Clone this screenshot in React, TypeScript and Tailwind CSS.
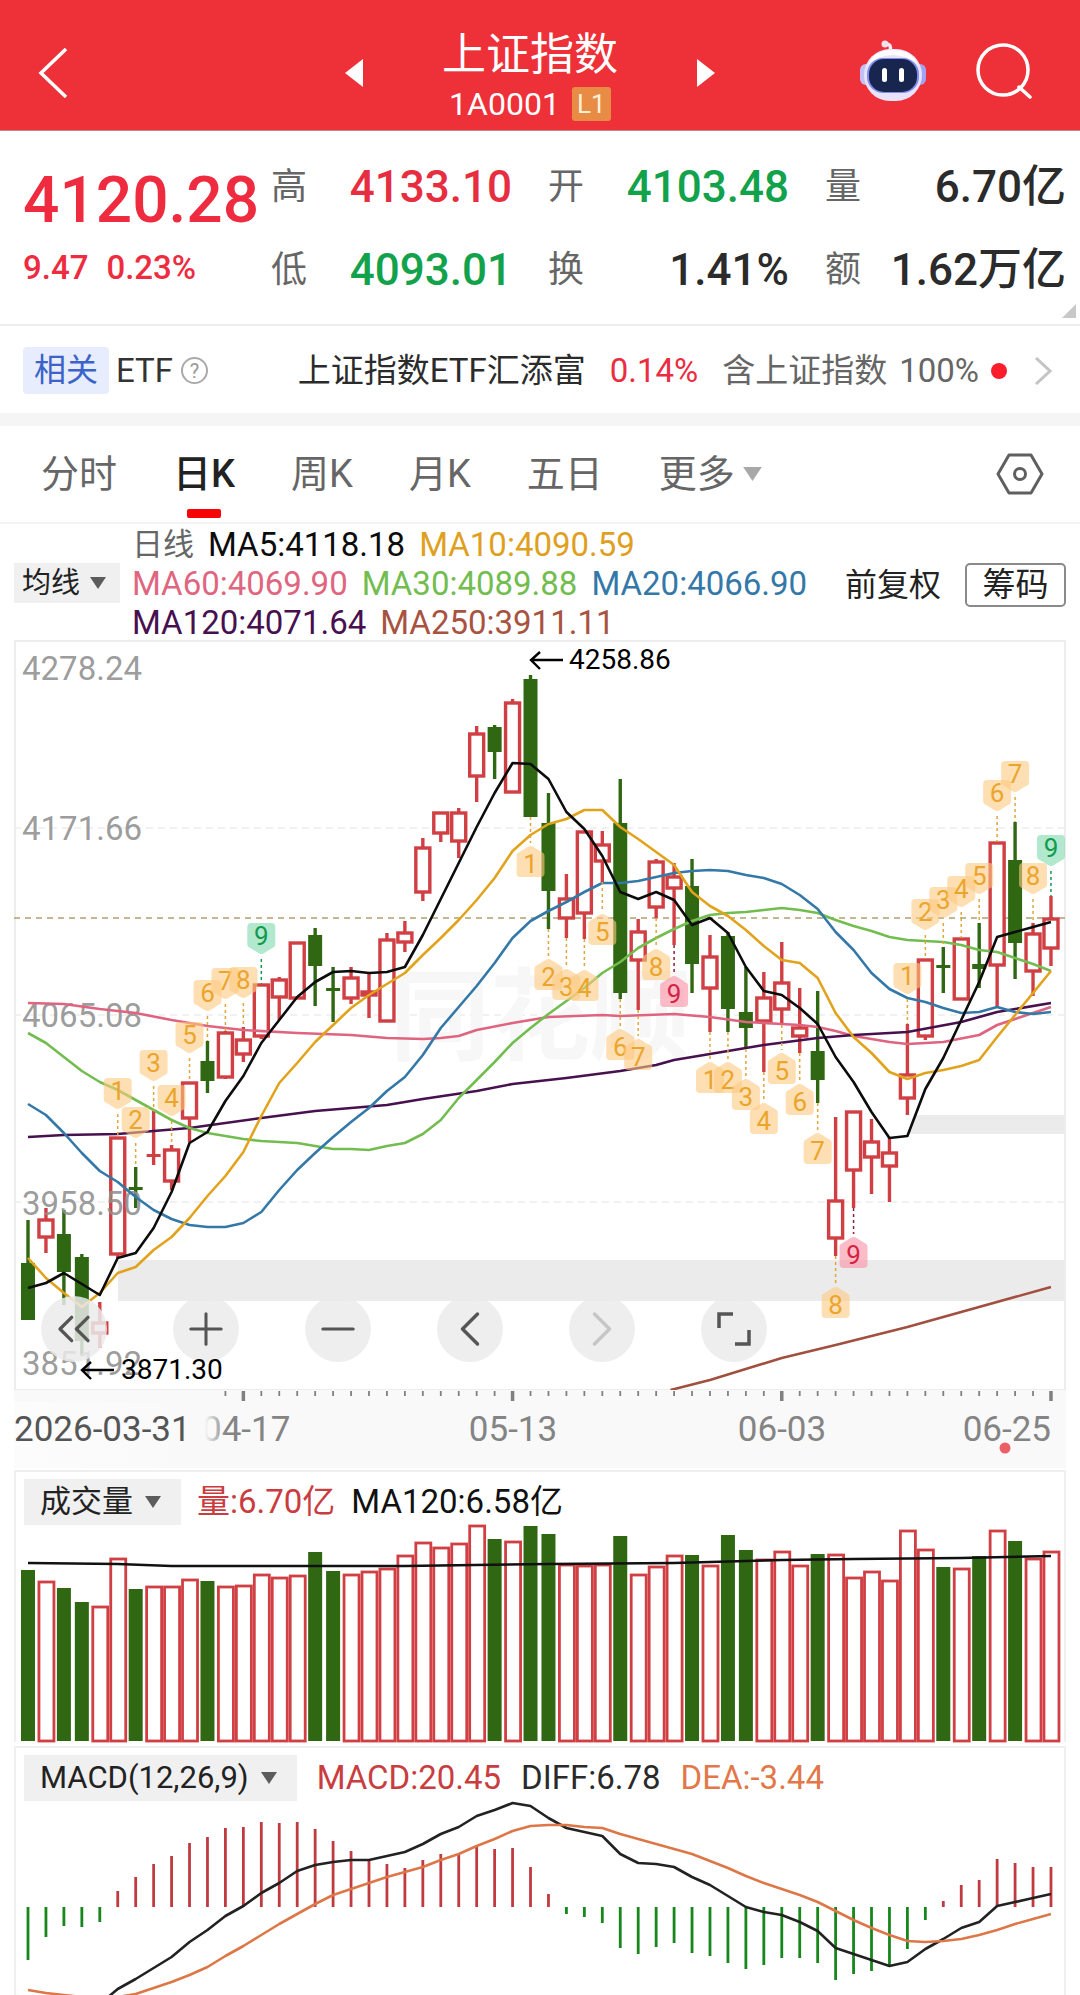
import { ChevronLeft, ChevronRight, ChevronsLeft, Minus, Plus } from "lucide-react";
import React, { useState } from "react";

const RED = "#d03f43";
const GREEN = "#2f6712";
const STEP = 17.947;
const cx = (i: number) => 28 + i * STEP;

// [high, body top, body bottom, low, 1 = up / 0 = down]
const candles = [
  [1220, 1263, 1320, 1320, 0],
  [1208, 1219, 1238, 1253, 1],
  [1210, 1234, 1272, 1305, 0],
  [1254, 1257, 1341, 1355, 0],
  [1302, 1322, 1334, 1348, 1],
  [1137, 1137, 1255, 1258, 1],
  [1167, 1187, 1189, 1208, 0],
  [1111, 1154, 1156, 1165, 1],
  [1145, 1149, 1182, 1190, 1],
  [1082, 1082, 1119, 1142, 1],
  [1041, 1061, 1081, 1093, 0],
  [1031, 1032, 1078, 1079, 1],
  [1027, 1039, 1055, 1062, 1],
  [984, 984, 1037, 1039, 1],
  [977, 979, 998, 1020, 1],
  [942, 942, 999, 999, 1],
  [928, 935, 966, 1006, 0],
  [967, 988, 990, 1022, 0],
  [967, 977, 999, 1004, 1],
  [972, 991, 996, 1018, 1],
  [933, 939, 1022, 1022, 1],
  [921, 932, 943, 952, 1],
  [838, 847, 893, 901, 1],
  [812, 812, 834, 842, 1],
  [808, 812, 842, 858, 1],
  [726, 733, 777, 802, 1],
  [725, 727, 752, 779, 0],
  [699, 702, 793, 793, 1],
  [675, 679, 817, 817, 0],
  [793, 823, 891, 929, 0],
  [874, 898, 919, 938, 1],
  [831, 831, 914, 939, 1],
  [831, 844, 862, 882, 1],
  [779, 823, 993, 999, 0],
  [919, 931, 961, 1010, 1],
  [859, 861, 908, 918, 1],
  [863, 876, 889, 945, 1],
  [859, 886, 964, 993, 0],
  [935, 956, 989, 1032, 1],
  [932, 936, 1009, 1032, 0],
  [967, 1012, 1028, 1049, 0],
  [972, 997, 1022, 1072, 1],
  [942, 982, 1010, 1025, 1],
  [988, 1027, 1037, 1053, 1],
  [991, 1051, 1080, 1103, 0],
  [1117, 1200, 1239, 1256, 1],
  [1111, 1111, 1171, 1208, 1],
  [1119, 1141, 1158, 1194, 1],
  [1137, 1152, 1167, 1202, 1],
  [1024, 1074, 1099, 1115, 1],
  [959, 959, 1037, 1040, 1],
  [947, 965, 968, 993, 0],
  [938, 938, 1000, 1000, 1],
  [923, 964, 969, 988, 0],
  [842, 842, 966, 1007, 1],
  [822, 860, 943, 979, 0],
  [923, 933, 972, 996, 1],
  [896, 918, 949, 966, 1],
];

const volumes = [
  1570, 1581, 1588, 1602, 1606, 1558, 1589, 1586, 1586, 1579, 1581, 1586, 1585, 1574, 1577, 1575, 1552, 1571, 1574,
  1571, 1568, 1555, 1542, 1547, 1543, 1525, 1539, 1541, 1526, 1534, 1564, 1565, 1564, 1536, 1574, 1566, 1555, 1555,
  1565, 1535, 1550, 1559, 1551, 1565, 1554, 1554, 1577, 1571, 1580, 1530, 1549, 1567, 1568, 1556, 1530, 1541, 1558,
  1551,
];

const macd = [
  1960, 1937, 1926, 1927, 1922, 1891, 1877, 1864, 1856, 1843, 1837, 1828, 1827, 1822, 1823, 1822, 1829, 1841, 1851,
  1860, 1864, 1868, 1860, 1854, 1853, 1846, 1849, 1848, 1867, 1894, 1914, 1917, 1923, 1948, 1954, 1947, 1943, 1953,
  1956, 1963, 1969, 1965, 1958, 1958, 1963, 1980, 1974, 1971, 1966, 1949, 1920, 1901, 1885, 1880, 1859, 1863, 1867,
  1867,
];

const diff = [
  2036, 2030, 2024, 2015, 2004, 1989, 1979, 1968, 1957, 1942, 1930, 1916, 1906, 1893, 1883, 1871, 1865, 1862, 1860,
  1860, 1856, 1852, 1844, 1834, 1827, 1816, 1810, 1803, 1806, 1818, 1828, 1832, 1836, 1854, 1863, 1864, 1867, 1877,
  1885, 1896, 1907, 1912, 1915, 1922, 1931, 1948, 1954, 1960, 1966, 1962, 1949, 1939, 1928, 1922, 1906, 1902, 1898,
  1894,
];

const dea = [
  1990, 1993, 1995, 1997, 1998, 1997, 1994, 1988, 1982, 1975, 1967, 1956, 1946, 1935, 1924, 1914, 1904, 1895, 1889,
  1883, 1877, 1872, 1867, 1860, 1854, 1846, 1839, 1831, 1826, 1825, 1825, 1827, 1828, 1834, 1839, 1844, 1849, 1854,
  1861, 1868, 1876, 1883, 1889, 1895, 1902, 1911, 1920, 1928, 1935, 1941, 1942, 1941, 1939, 1935, 1930, 1924, 1919,
  1914,
];

const ma5 = [
  1288, 1283, 1273, 1284, 1295, 1258, 1253, 1228, 1192, 1143, 1132, 1101, 1076, 1043, 1020, 997, 982, 972, 971, 973,
  972, 967, 935, 899, 863, 827, 793, 763, 764, 779, 812, 829, 856, 892, 899, 892, 900, 925, 918, 933, 967, 991, 995,
  1008, 1024, 1057, 1082, 1112, 1138, 1136, 1089, 1058, 1020, 982, 937, 932, 927, 922,
];

const ma10 = [
  1258, 1278, 1293, 1307, 1293, 1273, 1267, 1250, 1237, 1218, 1196, 1176, 1152, 1116, 1083, 1063, 1042, 1025, 1008,
  995, 984, 973, 955, 938, 920, 900, 878, 851, 835, 824, 819, 810, 810, 827, 839, 852, 865, 892, 906, 916, 930, 946,
  960, 963, 978, 1013, 1037, 1053, 1072, 1079, 1073, 1070, 1066, 1060, 1037, 1015, 993, 971,
];

const ma20 = [
  1104, 1115, 1133, 1153, 1171, 1182, 1197, 1210, 1219, 1225, 1227, 1227, 1223, 1212, 1190, 1170, 1153, 1137, 1122,
  1108, 1091, 1077, 1055, 1028, 1007, 986, 963, 938, 921, 911, 902, 892, 883, 883, 881, 877, 873, 871, 870, 871, 875,
  878, 884, 895, 909, 932, 950, 973, 989, 998, 1002, 1008, 1013, 1012, 1007, 1012, 1014, 1012,
];

const ma30 = [
  1033, 1043, 1057, 1071, 1082, 1090, 1100, 1110, 1120, 1128, 1133, 1136, 1139, 1141, 1142, 1143, 1146, 1149, 1149,
  1150, 1146, 1143, 1134, 1120, 1098, 1080, 1062, 1043, 1028, 1014, 1001, 988, 973, 962, 948, 938, 929, 921, 915, 913,
  912, 910, 908, 910, 913, 920, 926, 931, 937, 940, 941, 942, 945, 950, 952, 958, 964, 971,
];

// slow averages, [candle index, y]
const ma60 = [
  [0, 1003], [2, 1004], [4, 1009], [6, 1013], [8, 1020], [10, 1026], [12, 1030], [15, 1033], [18, 1035], [20, 1038],
  [22, 1039], [23, 1038], [24, 1036], [25, 1030], [27, 1023], [29, 1017], [32, 1015], [33, 1016], [36, 1014],
  [38, 1017], [40, 1022], [42, 1024], [43, 1025], [44, 1027], [45, 1031], [46, 1036], [48, 1042], [49, 1044],
  [51, 1042], [53, 1035], [54, 1025], [55, 1019], [57, 1007],
];
const ma120 = [
  [0, 1137], [2, 1135], [5, 1134], [9, 1128], [13, 1118], [16, 1111], [18, 1108], [20, 1105], [22, 1099], [25, 1091],
  [27, 1084], [30, 1078], [33, 1071], [35, 1065], [36, 1060], [38, 1054], [41, 1045], [44, 1038], [46, 1035],
  [49, 1032], [52, 1022], [54, 1012], [57, 1003],
];
const ma250 = [[35.8, 1390], [38, 1380], [42, 1358], [45, 1345], [49, 1327], [57, 1287]];
const volumeMa = [
  [0, 1563], [5, 1564], [8, 1566], [16, 1566], [21, 1566], [29, 1564], [36, 1563], [42, 1560], [46, 1559], [52, 1558],
  [57, 1556],
];

// [candle index, number, y of the outer edge], "up" ones sit above the candle
const marksAbove = [
  [5, 1, 1078], [6, 2, 1107], [7, 3, 1050], [8, 4, 1085], [9, 5, 1022], [10, 6, 980], [11, 7, 968], [12, 8, 967],
  [13, 9, 923], [49, 1, 963], [50, 2, 899], [51, 3, 887], [52, 4, 876], [53, 5, 863], [54, 6, 780], [55, 7, 761],
  [56, 8, 863], [57, 9, 835],
];
const marksBelow = [
  [28, 1, 845], [29, 2, 958], [30, 3, 968], [31, 4, 969], [32, 5, 913], [33, 6, 1028], [34, 7, 1038], [35, 8, 948],
  [36, 9, 975], [38, 1, 1061], [39, 2, 1061], [40, 3, 1078], [41, 4, 1102], [42, 5, 1052], [43, 6, 1083],
  [44, 7, 1132], [45, 8, 1286], [46, 9, 1236],
];

const priceLabels = [
  { text: "4278.24", y: 680 },
  { text: "4171.66", y: 840 },
  { text: "4065.08", y: 1027 },
  { text: "3958.50", y: 1215 },
  { text: "3851.92", y: 1375 },
];

const quotes = [
  { label: "高", value: "4133.10", color: "text-[#e62e40]" },
  { label: "开", value: "4103.48", color: "text-[#13a24c]" },
  { label: "量", value: "6.70亿", color: "text-[#2b2b2b]" },
  { label: "低", value: "4093.01", color: "text-[#13a24c]" },
  { label: "换", value: "1.41%", color: "text-[#2b2b2b]" },
  { label: "额", value: "1.62万亿", color: "text-[#2b2b2b]" },
];

const tabs = ["分时", "日K", "周K", "月K", "五日"];

const points = (list: number[][]) => list.map(([i, y]) => `${cx(i)},${y}`).join(" ");
const series = (list: number[]) => list.map((y, i) => `${cx(i)},${y}`).join(" ");

function Line({ pts, color }: { pts: string; color: string }) {
  return <polyline points={pts} fill="none" stroke={color} strokeWidth={2.6} strokeLinejoin="round" />;
}

function Caret({ className }: { className: string }) {
  return (
    <svg viewBox="0 0 16 12" className={className} fill="currentColor" aria-hidden="true">
      <path d="M0 0h16L8 12z" />
    </svg>
  );
}

function Mark({ index, n, y, above }: { index: number; n: number; y: number; above: boolean }) {
  const x = cx(index);
  const [high, , , low] = candles[index];
  const last = n === 9;
  const fill = last ? (above ? "#7fd9ab" : "#f990a4") : "#fdc980";
  const ink = last ? (above ? "#129a4d" : "#d32444") : "#eba52c";
  const dots = last ? (above ? "#129a4d" : "#8c2338") : "#dfa73a";
  const shape = above
    ? `M${x - 10} ${y}h20q4 0 4 4v17q0 3-3 4l-8 5q-3 2-6 0l-8-5q-3-1-3-4v-17q0-4 4-4z`
    : `M${x - 10} ${y + 32}h20q4 0 4-4v-17q0-3-3-4l-8-5q-3-2-6 0l-8 5q-3 1-3 4v17q0 4 4 4z`;

  return (
    <g>
      <line
        x1={x}
        x2={x}
        y1={above ? y + 36 : low}
        y2={above ? high : y - 2}
        stroke={dots}
        strokeWidth={1.5}
        strokeDasharray="3 3"
      />
      <path d={shape} fill={fill} fillOpacity={0.6} />
      <text x={x} y={above ? y + 22 : y + 28} textAnchor="middle" fontSize={26} fill={ink}>
        {n}
      </text>
    </g>
  );
}

function Candle({ data, index }: { data: number[]; index: number }) {
  const [high, top, bottom, low, up] = data;
  const x = cx(index);
  const thin = bottom - top < 4;
  const color = up ? RED : GREEN;

  return (
    <g>
      <line x1={x} x2={x} y1={high} y2={low} stroke={color} strokeWidth={3.4} />
      {up && !thin ? (
        <rect x={x - 7} y={top + 1} width={14} height={bottom - top - 2} fill="#fff" stroke={color} strokeWidth={3.4} />
      ) : (
        <rect x={x - 7} y={top} width={14} height={Math.max(bottom - top, 3)} fill={color} />
      )}
    </g>
  );
}

function PriceChart() {
  return (
    <svg viewBox="14 640 1052 750" className="block w-full h-auto" role="img" aria-label="日K线图">
      <rect x={118} y={1260} width={947} height={41} fill="#ebebeb" />
      <polygon points="916,1115 1065,1115 1065,1134 907,1134" fill="#ebebeb" />
      <g fill="none" stroke="#ededed" strokeWidth={2}>
        <rect x={15} y={641} width={1050} height={749} />
        <path d="M14 828H1065M14 1015H1065M14 1202H1065" strokeWidth={1.5} strokeDasharray="7 5" />
      </g>
      <text x={540} y={1052} textAnchor="middle" fontSize={100} fontWeight={700} fill="#f7f7f7">
        同花顺
      </text>
      <line x1={14} x2={1065} y1={918} y2={918} stroke="#b3a06e" strokeWidth={1.5} strokeDasharray="6 5" />

      {candles.map((data, i) => (
        <Candle key={i} data={data} index={i} />
      ))}

      <g fontSize={33} fill="#8f8f8f" fillOpacity={0.9}>
        {priceLabels.map((label) => (
          <text key={label.text} x={22} y={label.y}>
            {label.text}
          </text>
        ))}
      </g>

      <Line pts={points(ma250)} color="#a1503f" />
      <Line pts={points(ma60)} color="#df6480" />
      <Line pts={points(ma120)} color="#47104f" />
      <Line pts={series(ma30)} color="#73bd50" />
      <Line pts={series(ma20)} color="#3478a8" />
      <Line pts={series(ma10)} color="#e2a31c" />
      <Line pts={series(ma5)} color="#0c0c0c" />

      {marksAbove.map(([i, n, y]) => (
        <Mark key={i} index={i} n={n} y={y} above />
      ))}
      {marksBelow.map(([i, n, y]) => (
        <Mark key={i} index={i} n={n} y={y} above={false} />
      ))}

      <path d="M563 660H532M540 652L531 660L540 669" fill="none" stroke="#000" strokeWidth={2.4} />
      <text x={569} y={669} fontSize={28}>
        4258.86
      </text>
    </svg>
  );
}

// drawn apart from the chart so that it stays above the round buttons
function LowestPrice() {
  return (
    <svg viewBox="14 640 1052 750" className="pointer-events-none absolute inset-0 w-full h-full">
      <path d="M114 1370H83M91 1362L82 1370L91 1379" fill="none" stroke="#000" strokeWidth={2.4} />
      <text x={121} y={1379} fontSize={28}>
        3871.30
      </text>
    </svg>
  );
}

function DateAxis() {
  const major = [12, 27, 42, 57];

  return (
    <svg viewBox="14 1390 1052 78" className="block w-full h-auto bg-[#f9f9f9]">
      <defs>
        <linearGradient id="dateFade">
          <stop offset="0" stopColor="#fcfcfc" />
          <stop offset="0.9" stopColor="#f9f9f9" />
          <stop offset="1" stopColor="#f9f9f9" stopOpacity="0" />
        </linearGradient>
      </defs>
      {candles.map((_, i) =>
        i < 11 ? null : (
          <line
            key={i}
            x1={cx(i)}
            x2={cx(i)}
            y1={1391}
            y2={major.includes(i) ? 1401 : 1396}
            stroke="#808080"
            strokeWidth={major.includes(i) ? 3.5 : 1.8}
          />
        )
      )}
      <g fontSize={35} fill="#848484">
        <text x={202} y={1441}>04-17</text>
        <text x={513} y={1441} textAnchor="middle">05-13</text>
        <text x={782} y={1441} textAnchor="middle">06-03</text>
        <text x={1051} y={1441} textAnchor="end">06-25</text>
      </g>
      <rect x={14} y={1402} width={212} height={66} fill="url(#dateFade)" />
      <text x={14} y={1441} fontSize={35} fill="#555">
        2026-03-31
      </text>
      <circle cx={1005} cy={1448} r={5.5} fill="#ec5f66" />
    </svg>
  );
}

function VolumeChart() {
  return (
    <svg viewBox="14 1525 1052 217" className="block w-full h-auto overflow-visible" role="img" aria-label="成交量">
      {volumes.map((y, i) =>
        candles[i][4] ? (
          <rect key={i} x={cx(i) - 7} y={y + 1} width={15} height={1740 - y} fill="#fff" stroke={RED} strokeWidth={2.8} />
        ) : (
          <rect key={i} x={cx(i) - 7} y={y} width={14} height={1741 - y} fill={GREEN} />
        )
      )}
      <Line pts={points(volumeMa)} color="#111" />
    </svg>
  );
}

function MacdChart() {
  return (
    <svg viewBox="14 1801 1052 194" className="block w-full h-auto" role="img" aria-label="MACD">
      {macd.map((y, i) => (
        <line key={i} x1={cx(i)} x2={cx(i)} y1={1907} y2={y} stroke={y < 1907 ? "#bf3b40" : "#17871b"} strokeWidth={2.8} />
      ))}
      <Line pts={series(diff)} color="#222" />
      <Line pts={series(dea)} color="#dd7748" />
    </svg>
  );
}

function IndicatorSelect({ label, options }: { label: string; options: string[] }) {
  return (
    <label className="relative flex items-center bg-[#f0f0f0] text-[#222]">
      <select
        aria-label={label}
        className="field-sizing-content h-[46px] appearance-none bg-transparent pl-4 pr-12 text-[31px] leading-[46px]"
      >
        {options.map((option) => (
          <option key={option}>{option}</option>
        ))}
      </select>
      <Caret className="pointer-events-none absolute right-5 h-3 w-4 text-[#5c5c5c]" />
    </label>
  );
}

function RobotIcon() {
  return (
    <svg viewBox="0 0 66 64" className="h-16 w-[66px]" aria-hidden="true">
      <path d="M30 12Q32 5 26 5" fill="none" stroke="#f3e9f8" strokeWidth="3.5" strokeLinecap="round" />
      <circle cx="25" cy="5" r="3.5" fill="#f6dfe6" />
      <rect x="0" y="25" width="12" height="21" rx="6" fill="#c4bff4" />
      <rect x="54" y="25" width="12" height="21" rx="6" fill="#a3a3f4" />
      <rect x="4" y="10" width="58" height="52" rx="26" fill="#e9e3f9" />
      <path d="M8 26Q14 11 33 11T58 26Q48 16 33 16T8 26z" fill="#fff" />
      <rect x="7" y="19" width="52" height="35" rx="16" fill="#7f8eee" />
      <rect x="9" y="20" width="48" height="33" rx="15" fill="#18264f" />
      <rect x="22" y="29" width="5" height="14" rx="2.5" fill="#fff" />
      <rect x="39" y="29" width="5" height="14" rx="2.5" fill="#fff" />
    </svg>
  );
}

function Header() {
  return (
    <header className="flex h-[131px] items-center justify-between border-b border-[#c9888b] bg-[#ee3038] pl-[38px] pr-12 text-white">
      <div className="flex flex-1 items-center">
        <button type="button" aria-label="返回" className="pt-4">
          <svg viewBox="0 0 30 50" className="h-[50px] w-[30px]" fill="none" stroke="currentColor" strokeWidth="3.5">
            <path d="M28 1L3 25L28 49" />
          </svg>
        </button>
      </div>

      <div className="flex items-center gap-[79px] pr-2.5">
        <button type="button" aria-label="上一个" className="pt-4">
          <svg viewBox="0 0 18 28" className="h-7 w-[18px]" fill="currentColor">
            <path d="M18 0v28L0 14z" />
          </svg>
        </button>
        <div className="flex flex-col items-center pt-6">
          <h1 className="text-[44px] leading-[54px]">上证指数</h1>
          <div className="flex items-center gap-3 text-[32px] leading-[44px]">
            1A0001
            <span className="flex h-[34px] w-[39px] items-center justify-center rounded-[3px] bg-[#e78b45] text-[26px] text-[#fff0d8]">
              L1
            </span>
          </div>
        </div>
        <button type="button" aria-label="下一个" className="pt-4">
          <svg viewBox="0 0 18 28" className="h-7 w-[18px]" fill="currentColor">
            <path d="M0 0v28L18 14z" />
          </svg>
        </button>
      </div>

      <div className="flex flex-1 items-center justify-end gap-[50px] pt-3">
        <button type="button" aria-label="智能助手">
          <RobotIcon />
        </button>
        <button type="button" aria-label="搜索">
          <svg viewBox="0 0 56 56" className="size-14" fill="none" stroke="currentColor" strokeWidth="3.5">
            <circle cx="27" cy="27" r="25" />
            <path d="M43 44L54 54" strokeLinecap="round" />
          </svg>
        </button>
      </div>
    </header>
  );
}

function QuotePanel() {
  return (
    <section className="relative flex h-[195px] border-b-2 border-[#ececec] pl-[23px] pr-3.5 pt-3.5">
      <div className="w-[248px] font-medium text-[#ee2b3f]">
        <div className="pt-2.5 text-[64px] leading-[92px]">4120.28</div>
        <div className="flex gap-[18px] text-[33px] leading-[42px]">
          <span>9.47</span>
          <span>0.23%</span>
        </div>
      </div>
      <dl className="grid flex-1 grid-cols-3 gap-x-9 content-start">
        {quotes.map((item) => (
          <div key={item.label} className="flex h-[83px] items-center justify-between">
            <dt className="text-[36px] text-[#666]">{item.label}</dt>
            <dd className={`text-[44px] font-medium leading-[60px] ${item.color}`}>{item.value}</dd>
          </div>
        ))}
      </dl>
      <svg viewBox="0 0 14 14" className="absolute bottom-1.5 right-1 size-3.5" fill="#c8c8c8">
        <path d="M14 0v14H0z" />
      </svg>
    </section>
  );
}

function RelatedRow() {
  return (
    <section className="flex h-[100px] items-center justify-between border-b-[13px] border-[#f5f5f5] pl-[23px] pr-7 pt-0.5 text-[33px] leading-[47px]">
      <div className="flex items-center text-[#333]">
        <span className="rounded bg-[#e7edfc] px-[11px] text-[32px] text-[#3b63c9]">相关</span>
        <span className="pl-[7px]">ETF</span>
        <button
          type="button"
          aria-label="说明"
          className="ml-2 flex size-[27px] items-center justify-center rounded-full border-2 border-[#aaa] text-[20px] leading-none text-[#999]"
        >
          ?
        </button>
      </div>
      <a href="#etf" className="flex items-center text-[#666]">
        <span className="text-[#2b2b2b]">上证指数ETF汇添富</span>
        <span className="pl-6 text-[#ec2c41]">0.14%</span>
        <span className="pl-6">含上证指数</span>
        <span className="pl-3">100%</span>
        <span className="ml-3 size-4 rounded-full bg-[#fb1d2c]" />
        <svg viewBox="0 0 18 28" className="ml-[27px] h-7 w-[18px]" fill="none" stroke="#c4c4c4" strokeWidth="3">
          <path d="M2 1L16 14L2 27" />
        </svg>
      </a>
    </section>
  );
}

function PeriodTabs() {
  const [active, setActive] = useState("日K");

  return (
    <nav className="flex h-[98px] items-center justify-between border-b-2 border-[#f3f3f3] pl-[41px] pr-9 text-[38px] text-[#666]">
      <div className="flex h-full items-center gap-14">
        {tabs.map((tab) => (
          <button
            key={tab}
            type="button"
            onClick={() => setActive(tab)}
            className={`relative h-full ${active === tab ? "font-medium text-[#222]" : ""}`}
          >
            {tab}
            {active === tab && (
              <span className="absolute bottom-1 left-1/2 h-[9px] w-[34px] -translate-x-1/2 rounded-xs bg-[#f50505]" />
            )}
          </button>
        ))}
        <button type="button" className="flex items-center gap-2">
          更多
          <Caret className="h-3.5 w-[19px] text-[#a8a8a8]" />
        </button>
      </div>
      <button type="button" aria-label="设置">
        <svg viewBox="0 0 48 42" className="h-[42px] w-12" fill="none" stroke="#5f5f5f" strokeWidth="3">
          <path d="M13 2H35L46 21L35 40H13L2 21z" strokeLinejoin="round" />
          <circle cx="24" cy="21" r="5.5" />
        </svg>
      </button>
    </nav>
  );
}

function MaLegend() {
  return (
    <section className="flex h-[116px] items-center pl-3.5 pr-3.5 pt-0.5">
      <label className="relative flex items-center bg-[#f0f0f0] text-[#222]">
        <select
          aria-label="主图指标"
          className="field-sizing-content h-10 appearance-none bg-transparent pl-2 pr-10 text-[29px] leading-10"
        >
          <option>均线</option>
          <option>BOLL</option>
        </select>
        <Caret className="pointer-events-none absolute right-3.5 h-3 w-4 text-[#5c5c5c]" />
      </label>
      <div className="flex-1 pl-3 text-[33px] leading-[39px]">
        <div className="flex gap-3.5">
          <span className="text-[31px] text-[#666]">日线</span>
          <span className="text-[#0c0c0c]">MA5:4118.18</span>
          <span className="text-[#dfa01f]">MA10:4090.59</span>
        </div>
        <div className="flex gap-3.5">
          <span className="text-[#e0667f]">MA60:4069.90</span>
          <span className="text-[#73bd50]">MA30:4089.88</span>
          <span className="text-[#3478a8]">MA20:4066.90</span>
        </div>
        <div className="flex gap-3.5">
          <span className="text-[#47104f]">MA120:4071.64</span>
          <span className="text-[#a8533f]">MA250:3911.11</span>
        </div>
      </div>
      <div className="flex items-center gap-6 pt-1 text-[#222]">
        <button type="button" className="text-[32px]">
          前复权
        </button>
        <button type="button" className="h-11 w-[101px] rounded-[5px] border-2 border-[#8a8a8a] text-[33px] leading-10">
          筹码
        </button>
      </div>
    </section>
  );
}

const roundButton = "flex size-[66px] items-center justify-center rounded-full bg-[#ebebeb]/85 text-[#555]";

function ChartControls() {
  return (
    <div className="absolute bottom-7 left-[27px] flex gap-[66px]">
      <button type="button" aria-label="最早" className={roundButton}>
        <ChevronsLeft size={56} strokeWidth={1.4} />
      </button>
      <button type="button" aria-label="放大" className={roundButton}>
        <Plus size={52} strokeWidth={1.4} />
      </button>
      <button type="button" aria-label="缩小" className={roundButton}>
        <Minus size={52} strokeWidth={1.4} />
      </button>
      <button type="button" aria-label="左移" className={roundButton}>
        <ChevronLeft size={60} strokeWidth={1.4} />
      </button>
      <button type="button" aria-label="右移" disabled className={roundButton}>
        <ChevronRight size={60} strokeWidth={1.4} className="text-[#c6c6c6]" />
      </button>
      <button type="button" aria-label="全屏" className={roundButton}>
        <svg viewBox="0 0 34 34" className="size-[34px]" fill="none" stroke="currentColor" strokeWidth="3.5">
          <path d="M2 16V2H16M32 18V32H18" />
        </svg>
      </button>
    </div>
  );
}

export default function App() {
  return (
    <div className="w-full overflow-hidden bg-white [font-family:Roboto,'Noto_Sans_CJK_SC',sans-serif]">
      <Header />
      <QuotePanel />
      <RelatedRow />
      <PeriodTabs />
      <MaLegend />

      <main className="px-3.5">
        <div className="relative">
          <PriceChart />
          <ChartControls />
          <LowestPrice />
        </div>
        <DateAxis />

        <section className="mt-0.5 border-x-2 border-t-2 border-[#efefef]">
          <div className="flex items-center gap-4 pl-2 pt-[7px] text-[33px] leading-[46px]">
            <IndicatorSelect label="副图指标一" options={["成交量", "成交额"]} />
            <span className="text-[#c93c40]">量:6.70亿</span>
            <span className="text-[#111]">MA120:6.58亿</span>
          </div>
          <div className="-mx-0.5">
            <VolumeChart />
          </div>
        </section>

        <section className="mt-1 border-x-2 border-t-2 border-[#efefef]">
          <div className="flex items-center gap-5 pl-2 pt-[7px] text-[33px] leading-[46px]">
            <IndicatorSelect label="副图指标二" options={["MACD(12,26,9)", "KDJ(9,3,3)"]} />
            <span className="text-[#c93c40]">MACD:20.45</span>
            <span className="text-[#2a2a2a]">DIFF:6.78</span>
            <span className="text-[#e2774a]">DEA:-3.44</span>
          </div>
          <div className="-mx-0.5">
            <MacdChart />
          </div>
        </section>
      </main>
    </div>
  );
}
